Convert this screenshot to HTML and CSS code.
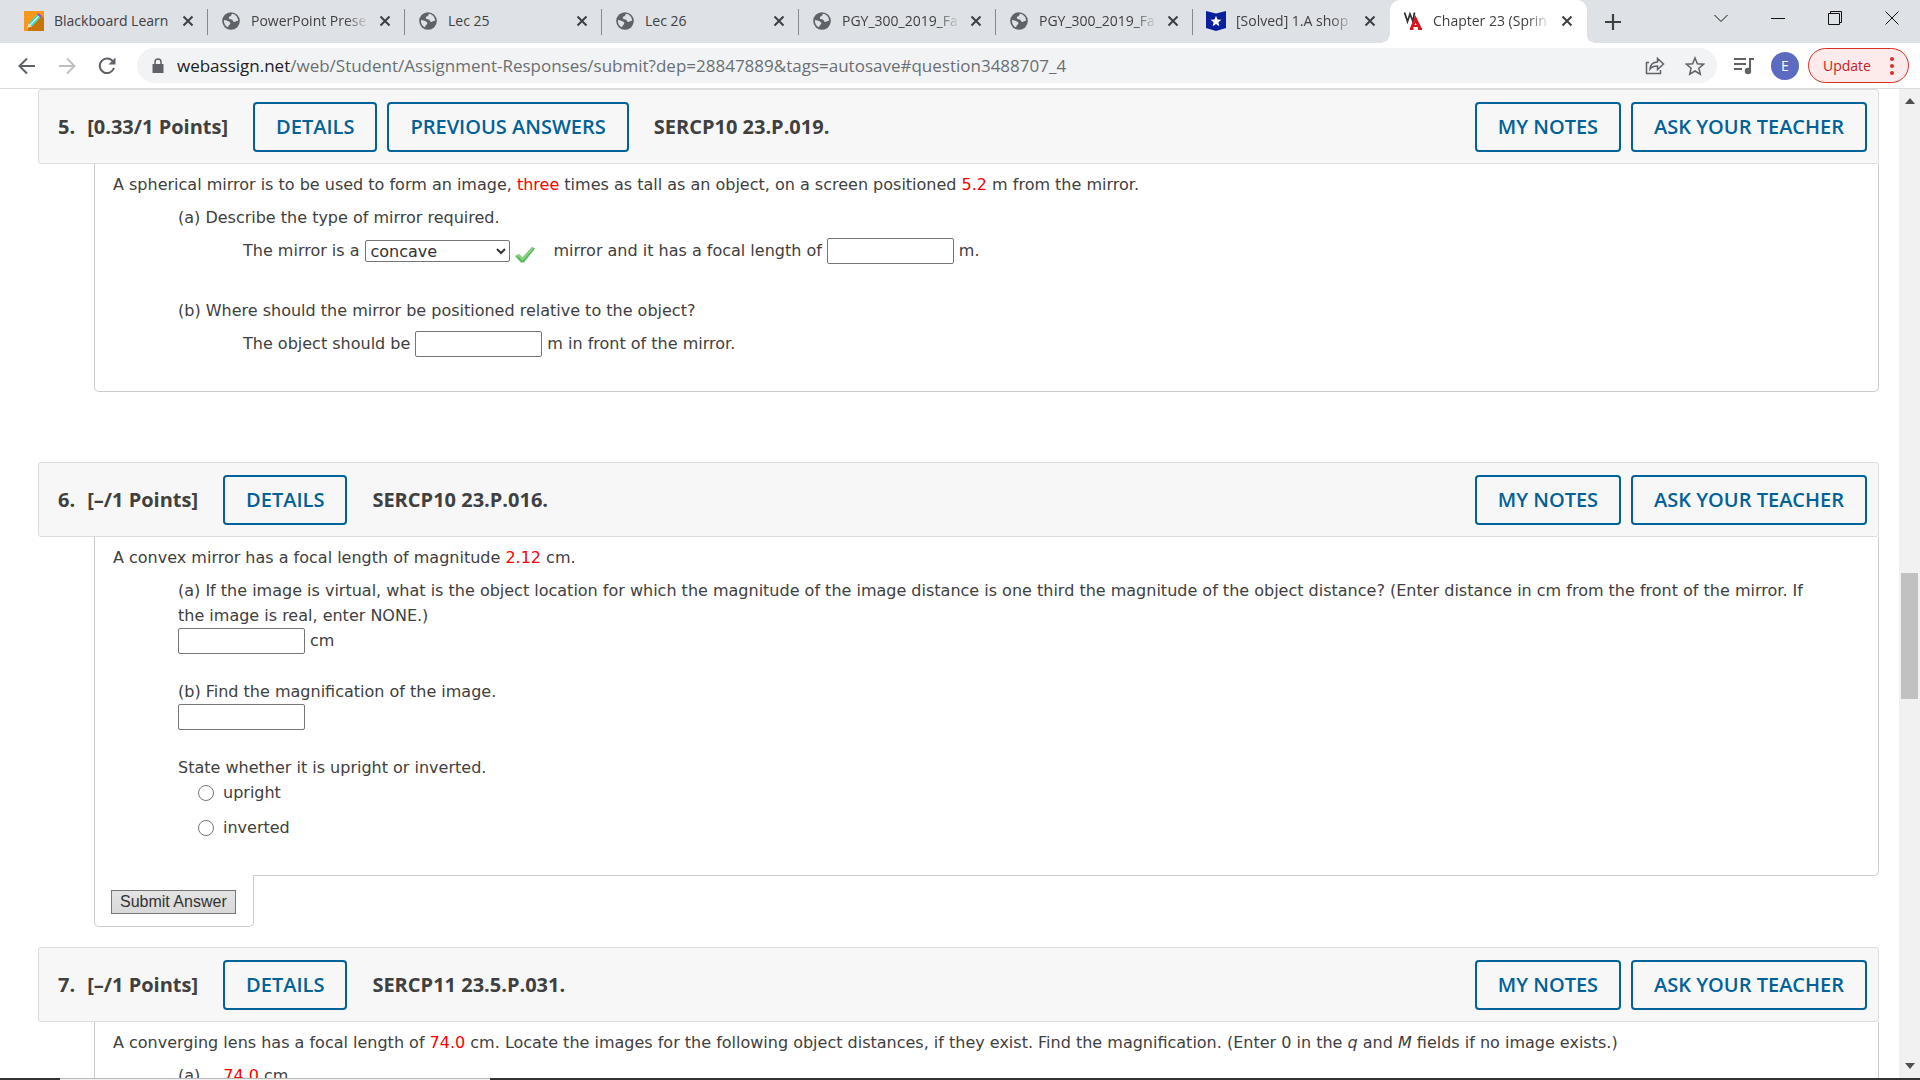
FILE: index.html
```html
<!DOCTYPE html>
<html lang="en">

<head>
    <meta charset="UTF-8">
    <meta name="viewport" content="width=device-width, initial-scale=1.0">
    <title>Chapter 23</title>
    <link rel="stylesheet" href="styles.css">
</head>

<body>
    <svg class="sprite" aria-hidden="true">
        <symbol id="globe" viewBox="0 0 18 18">
            <circle cx="9" cy="9" r="8.8" fill="#5f6368" />
            <path d="M10 1.8c-1 1.300-.3 2-1.600 2.400C7 4.600 6.600 5.400 7 6.400c.5 1 2 .6 3 1.200 1.200.8.600 2.200 2.200 2.400 1.400.2 1.600-1.300 3.900-1.200C16 5 13.500 2.200 10 1.800zM2 8c2 .2 3.600.9 5 1.600 1.500.8 1.600 1.800 1 2.600-.7 1-1.800 1-1.900 3.200C3.400 14.200 1.600 11.300 2 8z" fill="#dee1e6" />
        </symbol>
        <symbol id="cross" viewBox="0 0 12 12">
            <path d="M1.500 1.500l9 9M10.500 1.500l-9 9" stroke="#3c4043" stroke-width="2" fill="none" />
        </symbol>
    </svg>

    <header class="browser">
        <div class="tabs">
            <div class="tab">
                <svg class="favicon" viewBox="0 0 20 20">
                    <path d="M0 0h20v20H0z" fill="#f7981d" />
                    <path d="M4 16L17 4l3 3v13H4z" fill="#c87503" />
                    <path d="M4.500 12.500L13 3.500l3.500 3-8.500 9z" fill="#3ed6c0" />
                    <path d="M6.300 13.800L14.800 5" stroke="#d9fff6" stroke-width="1.200" />
                    <path d="M13 3.500l1.500-1.300 3.300 2.600-1.300 1.700z" fill="#9b4fc4" />
                    <path d="M4.500 12.500L8 15.500 3.200 17z" fill="#fbe3bd" />
                </svg>
                <span class="tab-title">Blackboard Learn</span>
                <button class="tab-close" aria-label="Close tab"><svg><use href="#cross" /></svg></button>
            </div>
            <div class="tab">
                <svg class="favicon globe"><use href="#globe" /></svg>
                <span class="tab-title fade">PowerPoint Prese</span>
                <button class="tab-close" aria-label="Close tab"><svg><use href="#cross" /></svg></button>
            </div>
            <div class="tab">
                <svg class="favicon globe"><use href="#globe" /></svg>
                <span class="tab-title">Lec 25</span>
                <button class="tab-close" aria-label="Close tab"><svg><use href="#cross" /></svg></button>
            </div>
            <div class="tab">
                <svg class="favicon globe"><use href="#globe" /></svg>
                <span class="tab-title">Lec 26</span>
                <button class="tab-close" aria-label="Close tab"><svg><use href="#cross" /></svg></button>
            </div>
            <div class="tab">
                <svg class="favicon globe"><use href="#globe" /></svg>
                <span class="tab-title fade">PGY_300_2019_Fa</span>
                <button class="tab-close" aria-label="Close tab"><svg><use href="#cross" /></svg></button>
            </div>
            <div class="tab">
                <svg class="favicon globe"><use href="#globe" /></svg>
                <span class="tab-title fade">PGY_300_2019_Fa</span>
                <button class="tab-close" aria-label="Close tab"><svg><use href="#cross" /></svg></button>
            </div>
            <div class="tab">
                <svg class="favicon" viewBox="0 0 20 20">
                    <path d="M0 0l10 2.500L20 0v17l-10 3-10-3z" fill="#0a1f9c" />
                    <path d="M10 4.800l1.500 3.700 4 .3-3.100 2.500 1 3.900L10 13l-3.400 2.200 1-3.900-3.100-2.500 4-.3z" fill="#fff" />
                </svg>
                <span class="tab-title fade">[Solved] 1.A shop</span>
                <button class="tab-close" aria-label="Close tab"><svg><use href="#cross" /></svg></button>
            </div>
            <div class="tab active">
                <svg class="favicon" viewBox="0 0 20 20">
                    <path d="M1.500 1.500l3 9L7 3l3 7.500 1.500-9" stroke="#333" stroke-width="1.800" fill="none" />
                    <path d="M8 18.500l4.500-10.500L17.500 18.500" stroke="#d8141c" stroke-width="3" fill="none" />
                    <path d="M7 18h3.500M15 18h4M10 15h6" stroke="#d8141c" stroke-width="1.800" fill="none" />
                </svg>
                <span class="tab-title fade">Chapter 23 (Sprin</span>
                <button class="tab-close" aria-label="Close tab"><svg><use href="#cross" /></svg></button>
            </div>
            <button class="new-tab" aria-label="New tab">
                <svg viewBox="0 0 16 16"><path d="M8 0v16M0 8h16" stroke="#3c4043" stroke-width="2.200" /></svg>
            </button>
            <div class="window-buttons">
                <button aria-label="Search tabs"><svg viewBox="0 0 14 14"><path d="M.5 4L7 10.500 13.500 4" /></svg></button>
                <button aria-label="Minimize"><svg viewBox="0 0 14 14"><path d="M0 7.500h14" /></svg></button>
                <button aria-label="Restore"><svg viewBox="0 0 14 14"><path d="M.5 2.500h11v11H.5zM2.500 2V.5h11v11H12" /></svg></button>
                <button aria-label="Close"><svg viewBox="0 0 14 14"><path d="M.5.5l13 13M13.500.5l-13 13" /></svg></button>
            </div>
        </div>

        <div class="toolbar">
            <button class="nav" aria-label="Back"><svg viewBox="0 0 20 20"><path d="M18 10H3M10 2.500L2.500 10l7.500 7.500" /></svg></button>
            <button class="nav dim" aria-label="Forward"><svg viewBox="0 0 20 20"><path d="M2 10h15M10 2.500l7.500 7.500-7.500 7.500" /></svg></button>
            <button class="nav" aria-label="Reload"><svg viewBox="0 0 20 20"><path d="M16 5.500A7.300 7.300 0 1 0 17 12" /><path d="M18.500 1.500v7h-7z" fill="#5f6368" stroke="none" /></svg></button>
            <div class="omnibox">
                <svg class="lock" viewBox="0 0 12 16">
                    <path d="M.5 6h11v9H.5z" fill="#5f6368" />
                    <path d="M3 6.500V4a3 3 0 0 1 6 0v2.500" fill="none" stroke="#5f6368" stroke-width="1.500" />
                </svg>
                <span class="url"><b>webassign.net</b>/web/Student/Assignment-Responses/submit?dep=28847889&amp;tags=autosave#question3488707_4</span>
                <button aria-label="Share"><svg viewBox="0 0 20 20"><path d="M4 6.500H1.500v11h14V14M5 13c.5-4.500 3.500-7 7.500-7V2.500L18.500 8l-6 5.500V10C9 10 7 10.500 5 13z" /></svg></button>
                <button aria-label="Bookmark"><svg viewBox="0 0 20 20"><path d="M10 2l2.400 5.700 6.100.5-4.600 4 1.400 6L10 15l-5.300 3.200 1.400-6-4.600-4 6.100-.5z" /></svg></button>
            </div>
            <button class="media" aria-label="Media control"><svg viewBox="0 0 20 18"><path d="M0 2h12M0 7h12M0 12h8M16 13V2h4" /><circle cx="14" cy="14" r="3.200" fill="#5f6368" stroke="none" /></svg></button>
            <button class="avatar">E</button>
            <button class="update">Update
                <svg viewBox="0 0 4 20"><circle cx="2" cy="3" r="2" /><circle cx="2" cy="10" r="2" /><circle cx="2" cy="17" r="2" /></svg>
            </button>
        </div>
    </header>

    <div class="viewport">
        <main class="page">
            <section class="question">
                <div class="question-header">
                    <span class="number">5.</span>
                    <span class="points">[0.33/1 Points]</span>
                    <button class="btn">DETAILS</button>
                    <button class="btn">PREVIOUS ANSWERS</button>
                    <span class="code">SERCP10 23.P.019.</span>
                    <button class="btn">MY NOTES</button>
                    <button class="btn">ASK YOUR TEACHER</button>
                </div>
                <div class="question-body">
                    <p>A spherical mirror is to be used to form an image, <em class="value">three</em> times as tall as an object, on a screen positioned <em class="value">5.2</em> m from the mirror.</p>
                    <div class="part">
                        <p>(a) Describe the type of mirror required.</p>
                        <div class="answer indent">
                            <label for="mirror-type">The mirror is a</label>
                            <select id="mirror-type">
                                <option>concave</option>
                                <option>convex</option>
                            </select>
                            <svg class="check" viewBox="0 0 20 16"><path d="M0 9l4-2 3.500 3.500L17 0l3 1.500L9 15.500H6z" fill="#5cb85c" /><path d="M2 9l2-.5 3.500 4L17.500 1.500" stroke="#93d58e" stroke-width="1.500" fill="none" /></svg>
                            <label for="focal-length">mirror and it has a focal length of</label>
                            <input type="text" id="focal-length">
                            <span>m.</span>
                        </div>
                    </div>
                    <div class="part">
                        <p>(b) Where should the mirror be positioned relative to the object?</p>
                        <div class="answer indent">
                            <label for="object-distance">The object should be</label>
                            <input type="text" id="object-distance">
                            <span>m in front of the mirror.</span>
                        </div>
                    </div>
                </div>
            </section>

            <section class="question">
                <div class="question-header">
                    <span class="number">6.</span>
                    <span class="points">[–/1 Points]</span>
                    <button class="btn">DETAILS</button>
                    <span class="code">SERCP10 23.P.016.</span>
                    <button class="btn">MY NOTES</button>
                    <button class="btn">ASK YOUR TEACHER</button>
                </div>
                <div class="question-body">
                    <p>A convex mirror has a focal length of magnitude <em class="value">2.12</em> cm.</p>
                    <div class="part stacked">
                        <label for="location">(a) If the image is virtual, what is the object location for which the magnitude of the image distance is one third the magnitude of the object distance? (Enter distance in cm from the front of the mirror. If the image is real, enter NONE.)</label>
                        <div class="answer"><input type="text" id="location"> <span>cm</span></div>
                    </div>
                    <div class="part stacked">
                        <label for="magnification">(b) Find the magnification of the image.</label>
                        <div class="answer"><input type="text" id="magnification"></div>
                    </div>
                    <div class="part stacked">
                        <div>State whether it is upright or inverted.</div>
                        <div class="choices">
                            <label><input type="radio" name="orientation">upright</label>
                            <label><input type="radio" name="orientation">inverted</label>
                        </div>
                    </div>
                </div>
                <div class="submit-box"><button class="submit">Submit Answer</button></div>
            </section>

            <section class="question">
                <div class="question-header">
                    <span class="number">7.</span>
                    <span class="points">[–/1 Points]</span>
                    <button class="btn">DETAILS</button>
                    <span class="code">SERCP11 23.5.P.031.</span>
                    <button class="btn">MY NOTES</button>
                    <button class="btn">ASK YOUR TEACHER</button>
                </div>
                <div class="question-body">
                    <p>A converging lens has a focal length of <em class="value">74.0</em> cm. Locate the images for the following object distances, if they exist. Find the magnification. (Enter 0 in the <i>q</i> and <i>M</i> fields if no image exists.)</p>
                    <div class="part">
                        <p class="item"><span>(a)</span><span><em class="value">74.0</em> cm</span></p>
                    </div>
                </div>
            </section>
        </main>

        <div class="scrollbar">
            <svg class="arrow" viewBox="0 0 10 6"><path d="M0 6l5-6 5 6z" /></svg>
            <div class="track">
                <div class="thumb"></div>
            </div>
            <svg class="arrow" viewBox="0 0 10 6"><path d="M0 0l5 6 5-6z" /></svg>
        </div>
    </div>

    <footer class="taskbar">
        <div class="task-light"></div>
    </footer>
</body>

</html>
```
FILE: styles.css
```css
* {
    margin: 0;
    padding: 0;
    box-sizing: border-box;
}

body {
    display: flex;
    flex-direction: column;
    height: 100vh;
    overflow: hidden;
    background: #fff;
    color: #404040;
    font-family: Verdana, 'DejaVu Sans', sans-serif;
    font-size: 16px;
    line-height: 25px;
}

button {
    border: none;
    background: none;
    font: inherit;
    cursor: pointer;
}

.sprite {
    display: none;
}

/* browser chrome */
.browser {
    flex: none;
    border-bottom: 1px solid #dadce0;
    font-family: 'Segoe UI', 'Open Sans', sans-serif;
}

.tabs {
    display: flex;
    align-items: center;
    height: 43px;
    padding-left: 11px;
    background: #dee1e6;
}

.tab {
    flex: 0 1 197px;
    display: flex;
    align-items: center;
    gap: 10px;
    min-width: 0;
    height: 26px;
    padding: 0 13px 2px;
    border-right: 1px solid #85888d;
    font-size: 14px;
}

.tab.active {
    position: relative;
    align-self: stretch;
    height: auto;
    border-right-color: #fff;
    border-radius: 10px 10px 0 0;
    background: #fff;
}

/* curved feet of the active tab */
.tab.active::before,
.tab.active::after {
    content: "";
    position: absolute;
    bottom: 0;
    width: 10px;
    height: 10px;
}

.tab.active::before {
    right: 100%;
    background: radial-gradient(circle at 0 0, transparent 10px, #fff 10px);
}

.tab.active::after {
    left: 100%;
    background: radial-gradient(circle at 100% 0, transparent 10px, #fff 10px);
}

.tab:has(+ .active) {
    border-color: transparent;
}

.favicon {
    flex: none;
    width: 20px;
    height: 20px;
}

.favicon.globe {
    width: 18px;
    height: 18px;
    margin: 0 1px;
}

.tab-title {
    flex: 1;
    white-space: nowrap;
}

.tab-title.fade {
    mask-image: linear-gradient(to right, #000 80%, transparent);
}

.tab-close,
.tab-close svg {
    display: block;
    width: 12px;
    height: 12px;
}

.new-tab {
    margin-left: 18px;
}

.new-tab svg {
    display: block;
    width: 16px;
    height: 16px;
}

.window-buttons {
    display: flex;
    align-self: flex-start;
    margin-left: auto;
}

.window-buttons button {
    display: flex;
    align-items: center;
    justify-content: center;
    width: 57px;
    height: 36px;
}

.window-buttons svg {
    width: 14px;
    height: 14px;
    fill: none;
    stroke: #111;
}

.toolbar {
    display: flex;
    align-items: center;
    height: 45px;
    padding: 0 11px 0 17px;
}

.toolbar svg {
    display: block;
    width: 20px;
    height: 20px;
    fill: none;
    stroke: #5f6368;
    stroke-width: 2;
}

.nav {
    margin-right: 20px;
}

.nav.dim {
    opacity: 0.4;
}

.omnibox {
    flex: 1;
    display: flex;
    align-items: center;
    gap: 20px;
    height: 35px;
    padding: 0 12px 0 15px;
    border-radius: 18px;
    background: #f1f3f4;
    font-size: 17px;
    color: #6b6f73;
}

.omnibox .lock {
    width: 12px;
    height: 16px;
    margin-right: -7px;
    stroke: none;
}

.omnibox button svg {
    stroke-width: 1.5;
}

.url {
    flex: 1;
    overflow: hidden;
    white-space: nowrap;
}

.url b {
    font-weight: 400;
    color: #202124;
}

.media {
    margin: 0 17px;
}

.avatar {
    width: 28px;
    height: 28px;
    border-radius: 50%;
    background: #5c6bc0;
    color: #fff;
    font-size: 14px;
}

.update {
    display: flex;
    align-items: center;
    justify-content: space-between;
    width: 101px;
    height: 35px;
    margin-left: 9px;
    padding: 0 14px;
    border: 1px solid #d93025;
    border-radius: 18px;
    background: #fcebea;
    color: #c5221f;
    font-size: 14px;
}

.toolbar .update svg {
    width: 4px;
    fill: #d93025;
    stroke: none;
}

/* page */
.viewport {
    flex: 1;
    display: flex;
    min-height: 0;
}

.page {
    flex: 1;
    overflow: hidden;
    padding: 0 20px 0 38px;
}

.question-header {
    display: flex;
    align-items: center;
    gap: 10px;
    height: 75px;
    padding: 0 11px 0 19px;
    border: 1px solid #ddd;
    border-radius: 3px;
    background: #f7f7f7;
    font-family: 'Open Sans', sans-serif;
    font-size: 20px;
    font-weight: 700;
    white-space: nowrap;
}

.number {
    margin-right: 2px;
}

.points {
    margin-right: 15px;
}

.code {
    flex: 1;
    margin-left: 15px;
}

.btn {
    height: 50px;
    padding: 0 21px;
    border: 2px solid #006298;
    border-radius: 4px;
    color: #006298;
    font-weight: 600;
}

.question-body {
    margin-left: 56px;
    padding: 8px 18px 35px;
    border: 1px solid #ccc;
    border-top: none;
    border-radius: 0 0 5px 5px;
}

.question + .question {
    margin-top: 70px;
}

.question-body p {
    margin-bottom: 8px;
}

.part {
    margin: 0 32px 0 65px;
}

.part + .part {
    margin-top: 35px;
}

.part.stacked + .part.stacked {
    margin-top: 26px;
}

.answer {
    display: flex;
    align-items: center;
    gap: 5px;
    height: 25px;
}

.answer.indent {
    margin-left: 65px;
}

.value {
    color: #f00;
    font-style: normal;
}

input[type="text"] {
    width: 127px;
    height: 26px;
    border: 1px solid #767676;
    border-radius: 2px;
}

select {
    width: 145px;
    height: 22px;
    padding-left: 1px;
    border: 1px solid #767676;
    border-radius: 2px;
    background: #fff;
    color: #333;
    font: inherit;
}

.check {
    align-self: flex-end;
    width: 20px;
    height: 16px;
    margin-right: 14px;
}

.choices {
    display: grid;
    gap: 10px;
    padding-left: 20px;
}

.choices label {
    display: flex;
    align-items: center;
    gap: 9px;
}

.choices input {
    width: 16px;
    height: 16px;
}

/* hangs off the body's bottom edge and hides the line above it */
.submit-box {
    width: fit-content;
    margin: -1px 0 0 56px;
    padding: 15px 17px 12px 16px;
    border: 1px solid #ccc;
    border-top: none;
    border-radius: 0 0 5px 5px;
    background: #fff;
}

.question-body:has(+ .submit-box) {
    border-bottom-left-radius: 0;
}

.submit {
    display: block;
    height: 24px;
    padding: 0 8px;
    border: 1px solid #767676;
    background: linear-gradient(#e3e3e3, #d9d9d9);
    color: #333;
    font: 16px 'Liberation Sans', Arial, sans-serif;
}

.question:has(.submit-box) + .question {
    margin-top: 20px;
}

.item {
    display: flex;
    gap: 23px;
}

/* scrollbar */
.scrollbar {
    display: flex;
    flex-direction: column;
    align-items: center;
    justify-content: space-between;
    width: 21px;
    padding: 9px 0;
    background: #f1f1f1;
}

.arrow {
    width: 10px;
    height: 6px;
    fill: #505050;
}

.track {
    flex: 1;
    display: flex;
    flex-direction: column;
    width: 17px;
}

.track::before {
    content: "";
    flex: 469;
}

.track::after {
    content: "";
    flex: 364;
}

.thumb {
    flex: 126;
    background: #c1c1c1;
}

.taskbar {
    flex: none;
    height: 2px;
    padding-left: 60px;
    background: #333;
}

.task-light {
    width: 430px;
    height: 2px;
    background: #f0f0f0;
    border-top: 1px solid #bbb;
}
```
